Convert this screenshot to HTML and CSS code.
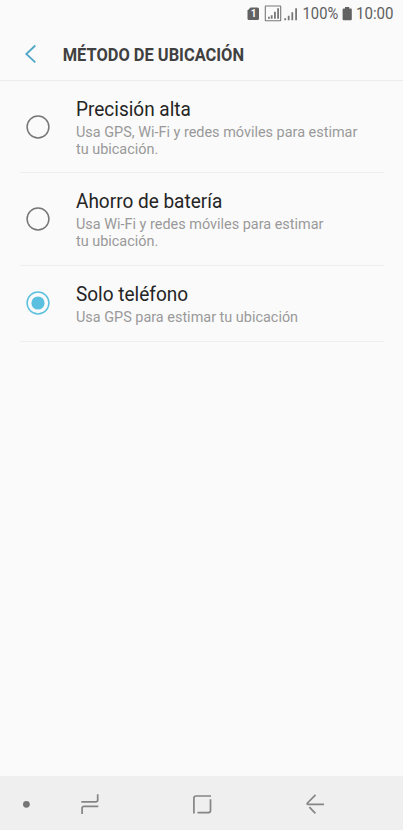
FILE: index.html
```html
<!DOCTYPE html>
<html lang="es">
<head>
<meta charset="UTF-8" />
<meta name="viewport" content="width=device-width, initial-scale=1" />
<title>Método de ubicación</title>
<link rel="stylesheet" href="styles.css">
</head>
<body>
<div class="screen">
  <!-- Barra de estado -->
  <div class="statusbar">
    <svg class="status-icons" width="156" height="28" viewBox="247 0 156 28">
      <path class="fill" d="M250.500 7.500H257.500Q259 7.500 259 9V18.500Q259 20 257.500 20H249Q247.500 20 247.500 18.500V10.500Z" />
      <text class="sim" x="250.800" y="17.300">1</text>
      <rect class="frame" x="265.300" y="6" width="15.400" height="14.800" rx="0.500" />
      <path class="bars" d="M268.900 16.800V18.700M271.700 15.200V18.700M274.900 11.800V18.700M278.100 8.300V18.700" />
      <path class="bars" d="M285.200 18.200V20.200M288.700 15.800V20.200M292.300 12.200V20.200M296.100 8.300V20.200" />
      <text class="status-text" x="302.600" y="19.300" textLength="35.600" lengthAdjust="spacingAndGlyphs">100%</text>
      <path class="fill" d="M345 7H349.200V8.500H351Q351.800 8.500 351.800 9.500V19Q351.800 20.200 350.800 20.200H343.700Q342.600 20.200 342.600 19V9.500Q342.600 8.500 343.600 8.500H345Z" />
      <text class="status-text" x="356" y="19.300" textLength="37.500" lengthAdjust="spacingAndGlyphs">10:00</text>
    </svg>
  </div>

  <!-- Encabezado -->
  <div class="header">
    <svg class="back" width="14" height="22" viewBox="24 43 14 22">
      <path d="M35.300 45.500L26.300 54L35.300 62.300" />
    </svg>
    <svg class="title" width="260" height="34" viewBox="-2 0 260 34">
      <text x="-0.300" y="24" textLength="181.300" lengthAdjust="spacingAndGlyphs">MÉTODO DE UBICACIÓN</text>
    </svg>
  </div>

  <!-- Opciones -->
  <div class="options">
    <div class="option">
      <svg class="radio" width="24" height="24" viewBox="0 0 24 24"><circle class="ring" cx="12" cy="12" r="10.900" /></svg>
      <div class="text">
        <div class="name">Precisión alta</div>
        <div class="desc">Usa GPS, Wi-Fi y redes móviles para estimar<br>tu ubicación.</div>
      </div>
    </div>
    <div class="option saving">
      <svg class="radio" width="24" height="24" viewBox="0 0 24 24"><circle class="ring" cx="12" cy="12" r="10.900" /></svg>
      <div class="text">
        <div class="name">Ahorro de batería</div>
        <div class="desc">Usa Wi-Fi y redes móviles para estimar<br>tu ubicación.</div>
      </div>
    </div>
    <div class="option short">
      <svg class="radio selected" width="24" height="24" viewBox="0 0 24 24"><circle class="ring" cx="12" cy="12" r="10.900" /><circle class="dot" cx="12" cy="12" r="6.600" /></svg>
      <div class="text">
        <div class="name">Solo teléfono</div>
        <div class="desc">Usa GPS para estimar tu ubicación</div>
      </div>
    </div>
  </div>

  <!-- Barra de navegación -->
  <div class="navbar">
    <svg width="403" height="54" viewBox="0 776 403 54">
      <circle class="nav-dot" cx="26.400" cy="804.300" r="3.400" />
      <path d="M81.300 801.900H95.800Q97.700 801.900 97.700 800V794.300M98.300 806.400H84Q82.100 806.400 82.100 808.300V813.900" />
      <path d="M211 796H196Q193.900 796 193.900 798.200V813.400M197.500 812.600H208.500Q210.500 812.600 210.500 810.600V799.300" />
      <path d="M315.500 794.900L307.500 803Q306.600 804.300 308 804.300H324M309.400 807.200L315.400 813.300" />
    </svg>
  </div>
</div>
</body>
</html>
```

FILE: styles.css
```css
body {
  margin: 0;
  background: #fafafa;
  font-family: Roboto, sans-serif;
}
.screen {
  display: flex;
  flex-direction: column;
  height: 830px;
}
svg {
  display: block;
  flex: none;
}

/* Status bar */
.statusbar {
  display: flex;
  justify-content: flex-end;
  height: 28px;
}
.fill {
  fill: #626262;
}
.sim {
  font-size: 10px;
  font-weight: 700;
  fill: #fafafa;
}
.frame {
  fill: none;
  stroke: #777;
  stroke-width: 1.1;
}
.bars {
  stroke: #777;
  stroke-width: 1.8;
}
.status-text {
  font-size: 17px;
  fill: #606060;
}

/* Header */
.header {
  display: flex;
  align-items: center;
  height: 52px;
  padding-left: 24px;
  border-bottom: 1px solid #ececec;
}
.back path {
  fill: none;
  stroke: #4fa6c8;
  stroke-width: 1.8;
}
.title {
  margin-left: 23px;
}
.title text {
  font-size: 19px;
  font-weight: 700;
  fill: #404040;
}

/* Options */
.options {
  flex: 1;
  padding: 0 19px 0 20px;
}
.option {
  display: flex;
  box-sizing: border-box;
  height: 92px;
  padding: 16px 0 0 6px;
  border-bottom: 1px solid #eee;
}
.option.saving {
  height: 93px;
}
.option.short {
  height: 76px;
}
.radio {
  margin-top: 18px;
}
.short .radio {
  margin-top: 9px;
}
.ring {
  fill: none;
  stroke: #777;
  stroke-width: 1.5;
}
.selected .ring {
  stroke: #5bc0df;
}
.dot {
  fill: #5bc0df;
}
.text {
  margin-left: 26px;
  white-space: nowrap;
}
.name {
  font-size: 20px;
  line-height: 24px;
  color: #252525;
  transform: scaleX(0.95);
  transform-origin: left;
}
.desc {
  margin-top: 3px;
  font-size: 15px;
  line-height: 17px;
  color: #999;
  transform: scaleX(0.962);
  transform-origin: left;
}

/* Navigation bar */
.navbar {
  height: 54px;
  background: #efefef;
}
.navbar path {
  fill: none;
  stroke: #858585;
  stroke-width: 1.7;
}
.nav-dot {
  fill: #757575;
}
```
